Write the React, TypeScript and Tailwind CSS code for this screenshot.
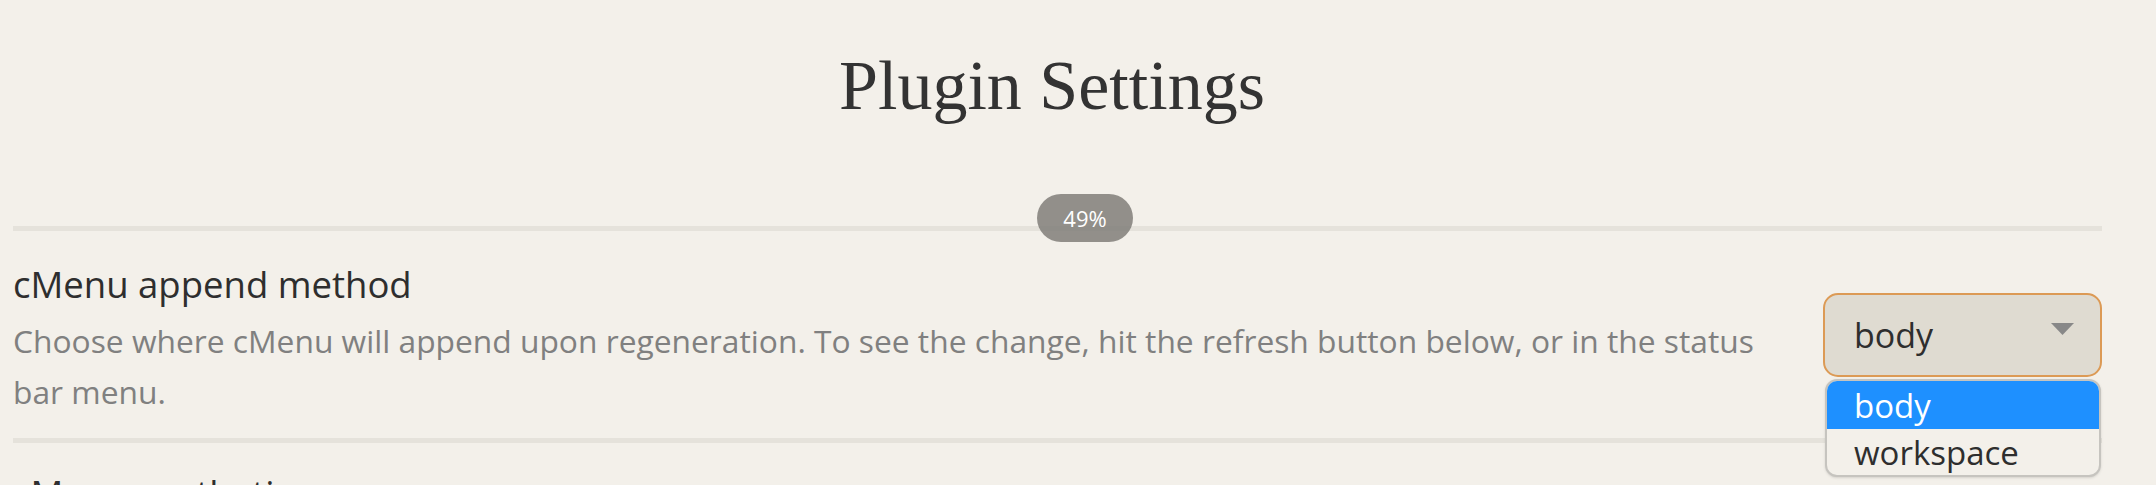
import React from "react";

export default function App() {
  return (
    <div className="h-[485px] w-full overflow-hidden bg-[#f3f0ea] font-['Open_Sans',sans-serif] text-[#2e2e2e]">
      <div className="px-[13px] pr-[54px]">
        <h1 className="pt-[51px] pr-[11px] text-center font-['Liberation_Serif',serif] text-[70px] leading-none font-normal text-[#333333]">
          Plugin Settings
        </h1>

        <div className="relative mt-[105px] h-[5px] bg-[#e5e2db]">
          <div className="absolute left-[1024px] top-[-32px] flex h-[48px] w-[96px] items-center justify-center rounded-full bg-[rgba(128,126,121,0.85)] text-[22px] leading-none text-white">
            49%
          </div>
        </div>

        <div className="flex h-[207px] items-center justify-between">
          <div className="w-[1765px] pt-[12px]">
            <div className="text-[36.5px] leading-[40px] text-[#2e2e2e]">cMenu append method</div>
            <div className="mt-[11px] text-[31.75px] leading-[51px] text-[#808080]">
              Choose where cMenu will append upon regeneration. To see the change, hit the refresh button below, or in the status bar menu.
            </div>
          </div>

          <div className="relative">
            <div className="flex h-[84px] w-[279px] items-center justify-between rounded-[15px] border-2 border-[#dc9a55] bg-[#dfdbd1] pl-[29px] pr-[26px]">
              <span className="text-[34px] leading-none text-[#2e2e2e]">body</span>
              <svg width="23" height="12" viewBox="0 0 23 12" className="mt-[-12px]">
                <polygon points="0,0 23,0 11.5,12" fill="#888888" />
              </svg>
            </div>
            <div className="absolute left-[2px] top-[86px] w-[276px] overflow-hidden rounded-[12px] border-2 border-[#c6c4bf] bg-[#f3f0ea] shadow-sm">
              <div className="h-[48px] bg-[#1e90ff] pl-[27px] text-[33px] leading-[50px] text-white">body</div>
              <div className="h-[46px] pl-[27px] text-[33px] leading-[48px] text-[#2e2e2e]">workspace</div>
            </div>
          </div>
        </div>

        <div className="h-[5px] bg-[#e5e2db]" />

        <div className="pt-[30px]">
          <div className="text-[36.5px] leading-[40px] text-[#2e2e2e]">cMenu aesthetic</div>
        </div>
      </div>
    </div>
  );
}
